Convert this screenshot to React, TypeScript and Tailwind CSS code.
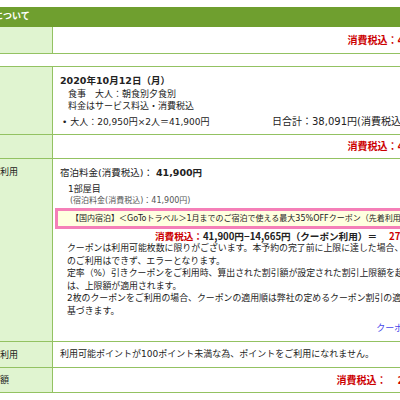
import React from 'react'

// label column is partly scrolled off the left edge, amounts run off the right edge
const border = 'border-[#93c262]'

function Row({ label, className = '', children }: { label?: string; className?: string; children: React.ReactNode }) {
  return (
    <div className={`flex border-b ${border}`}>
      <div className={`w-[97px] shrink-0 bg-[#e0f4d0] border-r ${border} pl-2 text-[9px] leading-[12px] ${className}`}>
        {label}
      </div>
      <div className="flex-1 min-w-0">{children}</div>
    </div>
  )
}

export default function App() {
  return (
    <div className="w-[400px] h-[400px] overflow-hidden bg-white text-[#222] font-['DejaVu_Sans','Noto_Sans_CJK_JP',sans-serif]">
      <div className="ml-[-44px] w-[498px] pt-[7px]">
        {/* first block */}
        <div className="h-[20px] bg-[#6f9f2f] text-white font-bold text-[9px] flex items-center pl-[2px]">
          宿泊料金について
        </div>
        <Row label="合計">
          <div className="h-[26px] flex items-center justify-end pr-2 text-[10px] font-bold text-[#cc0000]">
            消費税込：41,900円
          </div>
        </Row>

        {/* second block */}
        <div className={`mt-[12px] border-t ${border}`}>
          <Row label="宿泊日">
            <div className="pt-[7px] pb-[6px] pl-[7px] pr-2 text-[9px]">
              <div className="text-[9.5px] font-bold leading-[14px]">2020年10月12日（月）</div>
              <div className="pl-2 leading-[12px]">食事　大人：朝食別夕食別</div>
              <div className="pl-2 leading-[12px]">料金はサービス料込・消費税込</div>
              <div className="mt-[4px] flex leading-[12px] whitespace-nowrap">
                <span className="w-[212px] shrink-0 pl-[2px]">• 大人：20,950円×2人＝41,900円</span>
                <span className="text-[10px]">日合計：38,091円(消費税込41,900円)</span>
              </div>
            </div>
          </Row>
          <Row label="小計">
            <div className="h-[23px] flex items-center justify-end pr-2 text-[10px] font-bold text-[#cc0000]">
              消費税込：41,900円
            </div>
          </Row>
          <Row label="クーポン利用" className="pt-[7px]">
            <div className="pt-[7px] pb-[7px] text-[9px] whitespace-nowrap">
              <div className="pl-[7px] text-[9.5px] leading-[14px]">
                宿泊料金(消費税込)： <span className="font-bold">41,900円</span>
              </div>
              <div className="pl-[15px] mt-[3px] leading-[12px]">1部屋目</div>
              <div className="pl-[17px] leading-[11px] text-[8px] text-[#555]">(宿泊料金(消費税込)：41,900円)</div>
              <div className="mx-[2px] mt-[2px] border-[3px] border-[#f57fb8] bg-[#ffffdf] pl-[13px] text-[8px] leading-[15px]">
                【国内宿泊】＜GoToトラベル＞1月までのご宿泊で使える最大35%OFFクーポン（先着利用2万枚）
              </div>
              <div className="mt-[1px] pr-[24px] flex justify-end text-[9.6px] font-bold leading-[12px] font-['Noto_Sans_CJK_JP',sans-serif]">
                <span className="text-[#cc0000]">消費税込：</span>
                <span>41,900円−14,665円（クーポン利用）＝</span>
                <span className="ml-[12px] text-[#cc0000]">27,235円</span>
              </div>
              <div className="pl-[14px] text-[8.9px] leading-[12.5px]">
                <p>クーポンは利用可能枚数に限りがございます。本予約の完了前に上限に達した場合、クーポン</p>
                <p>のご利用はできず、エラーとなります。</p>
                <p>定率（%）引きクーポンをご利用時、算出された割引額が設定された割引上限額を超える場合</p>
                <p>は、上限額が適用されます。</p>
                <p>2枚のクーポンをご利用の場合、クーポンの適用順は弊社の定めるクーポン割引の適用順に</p>
                <p>基づきます。</p>
              </div>
              <div className="mt-[5px] pr-[6px] text-right leading-[12px]">
                <a className="text-[#4646ea]">クーポンについて</a>
              </div>
            </div>
          </Row>
          <Row label="ポイント利用" className="flex items-center">
            <div className="h-[25px] flex items-center pl-[7px] text-[9px] whitespace-nowrap">
              利用可能ポイントが100ポイント未満な為、ポイントをご利用になれません。
            </div>
          </Row>
          <Row label="お支払金額" className="flex items-center">
            <div className="h-[24px] flex items-center justify-end pr-2 text-[10px] font-bold text-[#cc0000]">
              <span>消費税込：</span>
              <span className="ml-[11px]">27,235円</span>
            </div>
          </Row>
        </div>
      </div>
    </div>
  )
}
